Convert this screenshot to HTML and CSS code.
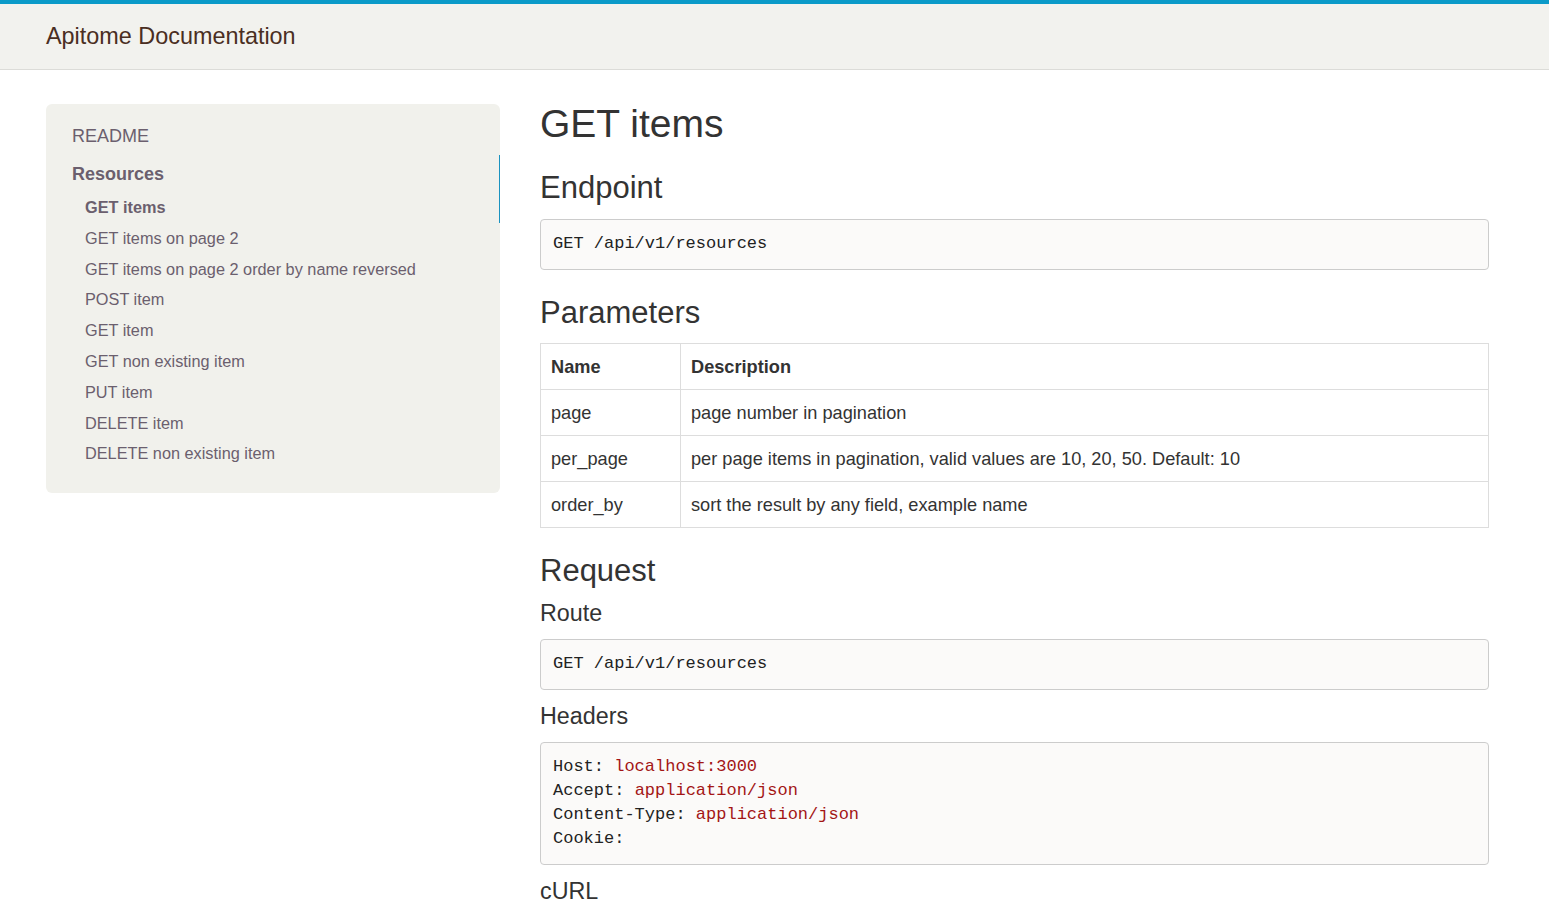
FILE: index.html
```html
<!DOCTYPE html>
<html lang="en">
<head>
<meta charset="utf-8">
<title>Apitome Documentation</title>
<link rel="stylesheet" href="styles.css">
</head>
<body>
<header class="navbar">
  <a class="brand" href="#">Apitome Documentation</a>
</header>
<div class="container">
  <nav class="sidebar">
    <a class="readme" href="#">README</a>
    <div class="group active">
      <a class="group-title" href="#">Resources</a>
      <a class="sub current" href="#">GET items</a>
    </div>
    <a class="sub" href="#">GET items on page 2</a>
    <a class="sub" href="#">GET items on page 2 order by name reversed</a>
    <a class="sub" href="#">POST item</a>
    <a class="sub" href="#">GET item</a>
    <a class="sub" href="#">GET non existing item</a>
    <a class="sub" href="#">PUT item</a>
    <a class="sub" href="#">DELETE item</a>
    <a class="sub" href="#">DELETE non existing item</a>
  </nav>
  <main class="content">
    <h1>GET items</h1>
    <h2>Endpoint</h2>
    <pre class="code">GET /api/v1/resources</pre>
    <h2>Parameters</h2>
    <table class="params">
      <colgroup><col class="col-name"><col></colgroup>
      <thead>
        <tr><th>Name</th><th>Description</th></tr>
      </thead>
      <tbody>
        <tr><td>page</td><td>page number in pagination</td></tr>
        <tr><td>per_page</td><td>per page items in pagination, valid values are 10, 20, 50. Default: 10</td></tr>
        <tr><td>order_by</td><td>sort the result by any field, example name</td></tr>
      </tbody>
    </table>
    <h2 class="tight">Request</h2>
    <h3>Route</h3>
    <pre class="code">GET /api/v1/resources</pre>
    <h3>Headers</h3>
    <pre class="code">Host: <span class="val">localhost:3000</span>
Accept: <span class="val">application/json</span>
Content-Type: <span class="val">application/json</span>
Cookie: </pre>
    <h3>cURL</h3>
  </main>
</div>
</body>
</html>
```
FILE: styles.css
```css
html, body {
  margin: 0;
  padding: 0;
  background: #ffffff;
}
body {
  font-family: "Liberation Sans", Arial, Helvetica, sans-serif;
  color: #333333;
  border-top: 4px solid #0b9ac8;
}
a { text-decoration: none; }

.navbar {
  height: 63px;
  padding-bottom: 2px;
  background: #f2f2ee;
  border-bottom: 1px solid #dcdcd8;
  display: flex;
  align-items: center;
  padding-left: 46px;
}
.brand {
  font-size: 23.4px;
  color: #4a2e22;
  line-height: 30px;
}

.container {
  display: flex;
  align-items: flex-start;
  gap: 40px;
  padding: 34px 60px 0 46px;
}

.sidebar {
  flex: 0 0 454px;
  width: 454px;
  box-sizing: border-box;
  background: #f1f1ec;
  border-radius: 6px;
  padding: 20px 0 24px 26px;
  display: flex;
  flex-direction: column;
}
.sidebar a { color: #6b5f6e; }
.readme {
  font-size: 18px;
  line-height: 24px;
}
.group {
  margin-top: 7px;
  border-right: 1px solid #1b93c0;
  display: flex;
  flex-direction: column;
  padding-top: 7px;
}
.group-title {
  font-size: 18px;
  line-height: 24px;
  font-weight: bold;
  margin-bottom: 6px;
}
.sub {
  font-size: 16.3px;
  line-height: 30.8px;
  padding-left: 13px;
}
.sub.current { font-weight: bold; }

.content {
  flex: 1 1 auto;
  min-width: 0;
}
h1 {
  font-size: 39px;
  font-weight: normal;
  line-height: 39px;
  margin: 0;
}
h2 {
  font-size: 31px;
  font-weight: normal;
  line-height: 34px;
  margin: 26px 0 13px;
}
h1 + h2 { margin-top: 28px; margin-bottom: 14px; }
h2.tight { margin-top: 26px; margin-bottom: 12px; }
h3 {
  font-size: 23.3px;
  font-weight: normal;
  line-height: 26px;
  margin: 12px 0 13px;
}
.code {
  font-family: "Liberation Mono", "Courier New", monospace;
  font-size: 17px;
  line-height: 24px;
  color: #222222;
  background: #fbfaf9;
  border: 1px solid #cccccc;
  border-radius: 4px;
  padding: 12px 12px 13px;
  margin: 0 0 13px;
  white-space: pre;
}
.code .val { color: #a31515; }

.params {
  width: 100%;
  border-collapse: collapse;
  table-layout: fixed;
  border: 1px solid #dddddd;
  font-size: 18.2px;
  margin: 0;
}
.params .col-name { width: 140px; }
.params th, .params td {
  border: 1px solid #dddddd;
  padding: 11px 10px 10px;
  line-height: 24px;
  text-align: left;
  vertical-align: top;
}
.params th { font-weight: bold; }
```
